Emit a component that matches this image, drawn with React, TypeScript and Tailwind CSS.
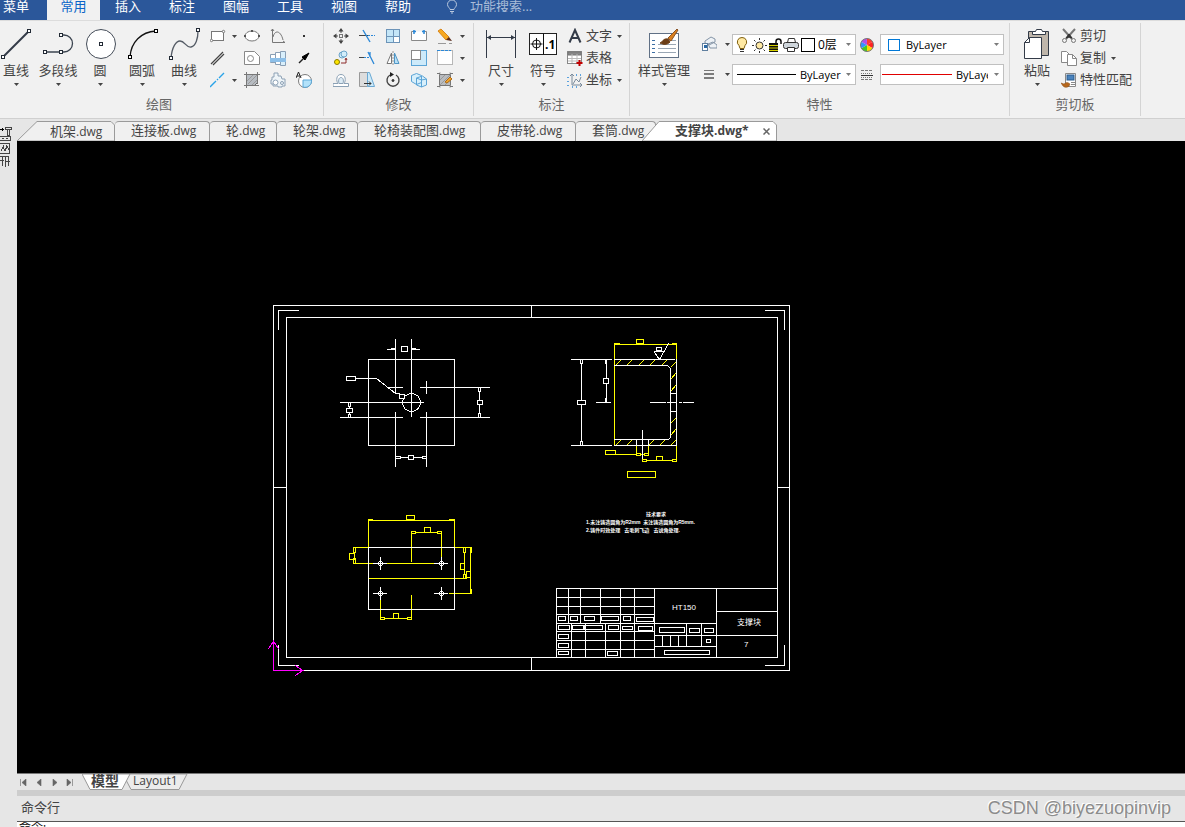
import React from "react";

type Box = [number, number, number, number];

const menus = ["插入", "标注", "图幅", "工具", "视图", "帮助"];

const docs = [
  { name: "连接板", cls: "w-[95px] pl-4" },
  { name: "轮", cls: "w-[67px] pl-4" },
  { name: "轮架", cls: "w-[81px] pl-4" },
  { name: "轮椅装配图", cls: "w-[123px] pl-4" },
  { name: "皮带轮", cls: "w-[95px] pl-4" },
  { name: "套筒", cls: "w-20 pl-4" },
];

function Arrow() {
  return (
    <svg width="5" height="3" viewBox="0 0 5 3" className="shrink-0 fill-[#444]">
      <path d="M0 0h5L2.5 3z" />
    </svg>
  );
}

function Icon({ children, size = 16 }: { children: React.ReactNode; size?: number }) {
  return (
    <svg width={size} height={size} viewBox={`0 0 ${size} ${size}`} fill="none" stroke="#777" className="shrink-0" aria-hidden="true">
      {children}
    </svg>
  );
}

function Nodes({ at, color = "#222a35" }: { at: [number, number][]; color?: string }) {
  return (
    <>
      {at.map(([x, y], i) => (
        <rect key={i} x={x - 1.5} y={y - 1.5} width="3" height="3" fill="#fff" stroke={color} />
      ))}
    </>
  );
}

function Big({ label, cls = "w-[42px]", icon }: { label: string; cls?: string; icon: React.ReactNode }) {
  return (
    <button className={`flex h-[66px] shrink-0 flex-col items-center pt-[3px] ${cls}`}>
      <Icon size={32}>{icon}</Icon>
      <span className="h-5 leading-5 whitespace-nowrap">{label}</span>
      <span className="pt-[3px]"><Arrow /></span>
    </button>
  );
}

function Small({ title, children }: { title: string; children: React.ReactNode }) {
  return (
    <button aria-label={title} className="flex h-[22px] w-[26px] items-center justify-center">
      <Icon>{children}</Icon>
    </button>
  );
}

function Drop({ cls = "w-[10px]" }: { cls?: string }) {
  return (
    <button aria-label="更多" className={`flex h-[22px] items-center justify-center ${cls}`}>
      <Arrow />
    </button>
  );
}

function Row({ label, drop, children }: { label: string; drop?: boolean; children: React.ReactNode }) {
  return (
    <button className="flex h-[22px] items-center gap-[3px] whitespace-nowrap">
      <Icon>{children}</Icon>
      <span>{label}</span>
      {drop && <span className="pl-[2px]"><Arrow /></span>}
    </button>
  );
}

function Group({ title, cls, children }: { title: string; cls: string; children: React.ReactNode }) {
  return (
    <section className={`my-[2px] shrink-0 border-r border-[#d4d4d4] ${cls}`}>
      <div className="flex h-[69px] pt-[2px]">{children}</div>
      <h2 className="h-6 text-center leading-6 text-[#666]">{title}</h2>
    </section>
  );
}

function DrawGroup() {
  return (
    <Group title="绘图" cls="-ml-3 w-[336px] pl-[7px]">
      <Big label="直线" icon={<><path d="M3 29L29 3" stroke="#333b48" strokeWidth="2" /><Nodes at={[[3, 29], [29, 3]]} /></>} />
      <Big label="多段线" icon={<><path d="M19 7h3a8.500 8.500 0 0 1 0 17H3" strokeWidth="1.300" stroke="#3b4450" /><Nodes at={[[3, 24], [19, 24], [19, 7]]} /></>} />
      <Big label="圆" icon={<><circle cx="17" cy="16" r="14.500" fill="#fff" stroke="#444c58" /><Nodes at={[[17, 16]]} /></>} />
      <Big label="圆弧" icon={<><path d="M4 29C5 14 15 4 30 3" stroke="#111" strokeWidth="1.300" /><Nodes at={[[4, 29], [30, 3]]} color="#000" /></>} />
      <Big label="曲线" icon={<><path d="M3 30C4 19 8 13 12 13C17 13 18 20 23 19C28 18 30 10 30 3" stroke="#555c66" strokeWidth="1.300" /><Nodes at={[[3, 30], [30, 2]]} /></>} />
      <div className="grid h-[66px] grid-cols-[24px_10px_26px_26px_26px]">
        <Small title="矩形"><rect x="1.500" y="3.500" width="12" height="9" fill="#fff" /><circle cx="1.500" cy="12.500" r="1.200" fill="#fff" /><circle cx="13.500" cy="3.500" r="1.200" fill="#fff" /></Small>
        <Drop />
        <Small title="椭圆"><ellipse cx="8" cy="8" rx="7" ry="5" fill="#fff" /><path d="M7 3h2M0 8h2M14 8h2" stroke="#555" strokeWidth="2" /></Small>
        <Small title="公式曲线"><path d="M2.500 1v13.500H15M1 3l1.500-2L4 3M13 13l2 1.500M3 9C5 1 11 3 13 12" /></Small>
        <Small title="点"><rect x="7" y="7" width="2" height="2" fill="#333" stroke="none" /></Small>

        <Small title="平行线"><path d="M1 14L13 2M3 15L14 4" stroke="#444" strokeWidth="1.200" /></Small>
        <span />
        <Small title="多边形"><path d="M.5 1.500h10l5 5v8H.5z" fill="#fff" stroke="#888" /><circle cx="6.500" cy="8.500" r="3" stroke="#888" /></Small>
        <Small title="轴"><path d="M.5 4.500h5v8h-5z" fill="#fff" stroke="#8a9fb5" /><path d="M5.500 2.500h5v12h-5z" fill="#fff" stroke="#8a9fb5" /><path d="M10.500 1.500h5v14h-5z" fill="#d9effb" stroke="#8a9fb5" /><path d="M0 8h16v4H0z" fill="#8dbfe8" stroke="none" /></Small>
        <Small title="箭头"><path d="M3 13l6-6" stroke="#222" strokeWidth="1.500" /><path d="M13 3l-7 4 3 3z" fill="#000" stroke="#000" /></Small>

        <Small title="中心线"><path d="M0 15l6-6M7 8l1-1M9 6l5-5" stroke="#29a3e8" strokeWidth="1.400" /></Small>
        <Drop />
        <Small title="填充"><path d="M2.500 2.500h11v8l-3 3h-8z" fill="#b7bcc2" stroke="#666" /><path d="M0 2.500h16M0 13.500h15M2.500 0v16M13.500 0v12" stroke="#777" /><path d="M3 9l6-6M4 12l9-9M8 13l5-5" stroke="#999" /></Small>
        <Small title="齿轮"><path d="M2 5h2V1h4v3h3l1 3h3v7h-3v1H8v-1H3v-2H1V8h1z" fill="#eef4f8" stroke="#8da1b5" /><circle cx="5.500" cy="10.500" r="2.500" fill="#fff" stroke="#8da1b5" /><circle cx="12" cy="11" r="1.500" stroke="#8da1b5" /></Small>
        <Small title="局部放大"><circle cx="9" cy="9" r="6.500" fill="#fff" stroke="#7d7d7d" /><path d="M7 8h8.500A6.500 6.500 0 0 1 7 15z" fill="#b3e2fa" stroke="#5aa7d8" /><path d="M0 6l2.500-6L5 6M1 4h3" stroke="#222" /></Small>
      </div>
    </Group>
  );
}

function ModifyGroup() {
  return (
    <Group title="修改" cls="w-[150px]">
      <div className="ml-1 grid h-[66px] grid-cols-[26px_26px_26px_26px_26px_8px]">
        <Small title="平移"><path d="M8 1v4M8 11v4M1 8h4M11 8h4" stroke="#555" /><path d="M8 0l2.500 3.500h-5zM8 16l2.500-3.500h-5zM0 8l3.500-2.500v5zM16 8l-3.500-2.500v5z" fill="#444" stroke="none" /><rect x="6.500" y="6.500" width="3" height="3" /></Small>
        <Small title="裁剪"><path d="M0 7.500h9" stroke="#444" /><path d="M9 7.500h7" stroke="#2b88d8" strokeDasharray="2 1" /><path d="M4 2l7 12" stroke="#2b88d8" strokeWidth="1.400" /></Small>
        <Small title="阵列"><rect x="1.500" y="1.500" width="13" height="13" fill="#fff" stroke="#6d94b8" /><path d="M8 2h6v6H8zM2 2h6v6H2zM2 8h6v6H2z" fill="#c4e6f8" stroke="none" /><path d="M8.500 1v14M1 8.500h14" stroke="#6d94b8" /></Small>
        <Small title="打断"><path d="M4 3.500H.500v9h15v-9H12" fill="#fff" stroke="#888" /><path d="M3 2v4M5 3.500H2M13 2v4M14 3.500h-3" stroke="#2b88d8" strokeWidth="1.500" /></Small>
        <Small title="删除"><path d="M1 3l3-2 8 8-3 3z" fill="#f6a821" stroke="#d9861a" /><path d="M9 12l3-3 3 4z" fill="#5b2c1c" stroke="none" /><path d="M1 15.500h8M12 15.500h3" stroke="#999" /></Small>
        <Drop cls="w-[9px]" />

        <Small title="平移复制"><circle cx="4" cy="12" r="2.500" fill="#ffe600" stroke="#8a7a00" /><circle cx="9" cy="5" r="3" fill="#d3edfa" stroke="#6ba4c9" /><circle cx="11" cy="4" r="3" fill="#d3edfa" stroke="#6ba4c9" /><path d="M8 13h5V9M12 10l1-2 1 2" stroke="#8c2b2b" /></Small>
        <Small title="延伸"><path d="M0 7.500h5" stroke="#444" /><path d="M5 7.500h6" stroke="#2b88d8" strokeDasharray="2 1" /><path d="M9 2l6 12M11 2v5" stroke="#2b88d8" strokeWidth="1.300" /></Small>
        <Small title="镜像"><path d="M6.500 3v10.500H2z" fill="#fff" stroke="#777" /><path d="M9.500 3v10.500H14z" fill="#b8e0f7" stroke="#4f95c4" /><path d="M8 1v14" stroke="#999" strokeDasharray="2 1" /></Small>
        <Small title="缩放"><rect x=".5" y=".5" width="15" height="15" fill="#cdeafa" stroke="#5ba4d6" /><rect x=".5" y=".5" width="9" height="9" fill="#fff" stroke="#888" /></Small>
        <Small title="选择"><rect x=".5" y=".5" width="15" height="14" fill="#fff" stroke="#777" strokeDasharray="1 1" /><path d="M0 .5h14" stroke="#2b88d8" strokeDasharray="3 1" /></Small>
        <Drop cls="w-[9px]" />

        <Small title="等距线"><path d="M0 11.500h5C3 9 3 2.500 8 2.500s5 6.500 3 9h4.500v3H0v-3" fill="#fff" stroke="#8ba1b5" /><path d="M6 11.500C5 8 6 5.500 8 5.500s3 2.500 2 6z" stroke="#8ba1b5" fill="#dcebf5" /></Small>
        <Small title="拉伸"><path d="M.5.5h8v14h-8z" fill="#ddd" stroke="#999" /><path d="M8.500.5h2l5 14h-7z" fill="#cdeafa" stroke="#6aa8d2" /><path d="M5 11.500h7M10 9.500l2 2-2 2" stroke="#333" /></Small>
        <Small title="旋转"><path d="M5 3a6 6 0 1 0 6 0" stroke="#444" strokeWidth="1.400" /><path d="M5 0v5l4-2.500z" fill="#222" stroke="none" /><circle cx="8" cy="8.500" r="1" fill="#333" stroke="#333" /></Small>
        <Small title="三维"><path d="M.5 3.500l5-2 5 2v7l-5 2-5-3zM5.500 6l6-2 4 3v6l-5 2-5-2z" fill="#d7effb" stroke="#5ba4d6" /><path d="M5.500 6l5 2v7M10.500 8l5-1" stroke="#5ba4d6" /></Small>
        <Small title="填充编辑"><path d="M2.500 2.500h11v11h-11z" fill="#b9bcc0" stroke="#777" /><path d="M3 8l5-5M3 13L13 3M8 13l5-5" stroke="#999" /><path d="M0 1.500h3v-1M0 14.500h3v1M16 1.500h-3v-1M16 14.500h-3v1" stroke="#777" /><path d="M8 10l5-5 2 2-5 4z" fill="#f0a32c" stroke="#b06c14" /></Small>
        <Drop cls="w-[9px]" />
      </div>
    </Group>
  );
}

function AnnotateGroup() {
  return (
    <Group title="标注" cls="w-[156px]">
      <div className="flex pl-[6px]">
        <Big
          label="尺寸"
          icon={
            <>
              <path d="M1.500 2v28M30.500 2v28M2 9.500h28" stroke="#333b48" />
              <path d="M2 9.500l4-2.500v5zM30 9.500l-4-2.500v5z" fill="#333b48" stroke="none" />
            </>
          }
        />
        <Big
          label="符号"
          icon={
            <>
              <rect x="2.500" y="5.500" width="27" height="21" fill="#fff" stroke="#222" />
              <path d="M16.500 5.500v21M3.500 16h12M9.500 10v12" stroke="#111" />
              <circle cx="9.500" cy="16" r="4" stroke="#111" />
              <text x="18" y="21" fill="#000" stroke="none" fontSize="12" fontWeight="700" fontFamily="Open Sans">.1</text>
            </>
          }
        />
        <div className="ml-[3px] flex flex-col">
          <Row label="文字" drop><path d="M2.500 14.500L8 2l5.500 12.500M4.500 10h7" stroke="#333b48" strokeWidth="2" /></Row>
          <Row label="表格"><rect x=".5" y="1.500" width="14" height="12" fill="#fff" stroke="#888" /><path d="M1 2h13v3H1z" fill="#888" /><path d="M1 8.500h13M1 11h13M5 4v9M10 4v9" stroke="#bbb" /><path d="M12.500 10v6M9.500 13h6" stroke="#c00000" strokeWidth="2" /></Row>
          <Row label="坐标" drop><path d="M5 2v11h10M3 4l2-2 2 2M13 11l2 2-2 2M6 12l3-5 3 3 2-5" stroke="#7a8b9c" /><path d="M1 5v1M1 9v1M1 13v1M5 15h1M9 15h1M9 3h1M13 3h1" stroke="#2b88d8" strokeWidth="1.500" /></Row>
        </div>
      </div>
    </Group>
  );
}

const wheel = ["#ff3b30", "#ff2222", "#ffd800", "#45c926", "#3393ff", "#b04ee8"];

function PropertyGroup() {
  const combo = "flex h-[21px] w-[124px] shrink-0 items-center border border-[#c0c0c0] bg-white text-black";
  const select = "min-w-0 appearance-none bg-transparent text-[11px] leading-4 outline-none";
  return (
    <Group title="特性" cls="w-[380px]">
      <Big
        label="样式管理"
        cls="ml-[5px] w-[58px]"
        icon={
          <>
            <rect x="1.500" y="5.500" width="29" height="24" fill="#fff" stroke="#607085" />
            <path d="M4 12.500h4M4 16.500h4M4 20.500h4M4 24.500h4" stroke="#3d6fa5" strokeDasharray="3 1" />
            <path d="M10 16.500h18M10 20.500h18M10 24.500h18M20 12.500h8" stroke="#9aa7b5" />
            <path d="M12 15c3-1 3-5 8-4l2 3c-3 3-6 3-10 1z" fill="#6b3d16" stroke="#6b3d16" />
            <path d="M20 10L29 1l1 1-7 11z" fill="#d97f1e" stroke="#8a5426" />
          </>
        }
      />
      <div className="ml-[3px] mt-2 flex flex-col gap-2">
        <div className="flex h-[22px] items-center">
          <Small title="图层"><path d="M4 5l6-4 4 2v3l-6 3-4-2zM7 8l5-2 4 3v3H9z" fill="#eef2f6" stroke="#8494a6" /><rect x="1.500" y="7.500" width="5" height="7" fill="#fff" stroke="#5f7f9f" /><rect x="3" y="9" width="3" height="3" fill="#2b6aa5" stroke="none" /></Small>
          <Drop />
        </div>
        <div className="flex h-[22px] items-center">
          <Small title="线宽"><path d="M3 4.500h10" /><path d="M3 8h10M3 12h10" strokeWidth="1.500" stroke="#555" /></Small>
          <Drop />
        </div>
      </div>
      <div className="mt-[9px] flex flex-col gap-[9px]">
        <div className={combo}>
          <Icon size={18}><path d="M9 1.500a4.500 4.500 0 0 0-3 8l1 3h4l1-3a4.500 4.500 0 0 0-3-8z" fill="#ffe9a3" stroke="#806010" /><path d="M7 13.500h4M7 15.500h4" stroke="#333" /></Icon>
          <Icon><circle cx="8.500" cy="8.500" r="3.500" fill="#ffe9a3" stroke="#333" /><path d="M8.500 1v2M8.500 14v2M1 8.500h2M14 8.500h2M3 3l1.500 1.500M14 3l-1.500 1.500M3 14l1.500-1.500M14 14l-1.500-1.500" stroke="#333" /></Icon>
          <Icon><path d="M9 9V4.500a2.500 2.500 0 0 1 5 0V7" stroke="#111" strokeWidth="1.500" /><rect x="2" y="6" width="9" height="9" fill="#111" stroke="none" /><path d="M2 8.500h9M2 11h9M2 13.500h9" stroke="#d7d100" /></Icon>
          <Icon><path d="M4.500 5.500l1-4h6l1 4" fill="#fff" stroke="#333" /><rect x=".5" y="5.500" width="15" height="6" rx="2" fill="#cfd6dc" stroke="#333" /><path d="M4.500 10.500h7v4h-7z" fill="#fff" stroke="#333" /></Icon>
          <span className="ml-[2px] h-[14px] w-[14px] shrink-0 border border-black bg-white" />
          <select aria-label="当前层" className="ml-[3px] min-w-0 flex-1 appearance-none bg-transparent text-xs leading-4 outline-none"><option>0层</option></select>
          <span className="mr-1 opacity-70"><Arrow /></span>
        </div>
        <div className={combo}>
          <span className="ml-1 h-px w-[59px] shrink-0 bg-black" />
          <select aria-label="线宽" className={`ml-1 flex-1 ${select}`}><option>ByLayer</option></select>
          <span className="mr-1 opacity-70"><Arrow /></span>
        </div>
      </div>
      <div className="mt-[9px] flex w-6 flex-col gap-2">
        <button aria-label="颜色" className="flex h-[22px] items-center justify-center pr-[2px]">
          <Icon>
            {wheel.map((c, i) => (
              <path key={c} d="M8 8L8 1.500A6.500 6.500 0 0 1 13.600 4.700z" fill={c} stroke="none" transform={`rotate(${i * 60} 8 8)`} />
            ))}
            <circle cx="8" cy="8" r="6.500" stroke="#777" />
          </Icon>
        </button>
        <button aria-label="线型" className="flex h-[22px] items-center justify-center pr-[2px]">
          <Icon><path d="M2 3.500h12M2 12.500h12" strokeDasharray="3 1" /><path d="M2 6.500h12M2 10.500h12" strokeDasharray="1 1" /><path d="M2 8.500h12" stroke="#333" /></Icon>
        </button>
      </div>
      <div className="mt-[9px] flex flex-col gap-[9px]">
        <div className={combo}>
          <span className="ml-[7px] h-3 w-3 shrink-0 border border-[#0078d7] bg-white" />
          <select aria-label="颜色" className={`ml-[6px] flex-1 ${select}`}><option>ByLayer</option></select>
          <span className="mr-1 opacity-70"><Arrow /></span>
        </div>
        <div className={combo}>
          <span className="ml-px h-px w-[70px] shrink-0 bg-[#e00000]" />
          <select aria-label="线型" className={`ml-1 w-8 ${select}`}><option>ByLayer</option></select>
          <span className="mr-1 ml-auto opacity-70"><Arrow /></span>
        </div>
      </div>
    </Group>
  );
}

function ClipboardGroup() {
  return (
    <Group title="剪切板" cls="w-[131px]">
      <Big
        label="粘贴"
        cls="ml-[6px] w-[42px]"
        icon={
          <>
            <path d="M7.500 3.500h20v24h-20z" fill="#bfb6ab" stroke="#333b48" />
            <path d="M11.500 6.500v-3h3l1-2h5l1 2h3v3z" fill="#fff" stroke="#333b48" />
            <path d="M8.500 9.500h12v21h-17v-16z" fill="#fff" stroke="#333b48" />
            <path d="M3.500 14.500h5v-5" stroke="#333b48" />
          </>
        }
      />
      <div className="ml-[3px] flex flex-col">
        <Row label="剪切"><path d="M2 1l9 10M14 1L5 11" stroke="#777" strokeWidth="2" /><path d="M8 6l3 4-3-1-3 1z" fill="#333" stroke="#333" /><circle cx="3.500" cy="12.500" r="2" stroke="#777" /><circle cx="12.500" cy="12.500" r="2" stroke="#777" /></Row>
        <Row label="复制" drop><path d="M.5 1.500h5l3 3v8h-8z" fill="#fff" stroke="#888" /><path d="M6.500 4.500h5l4 4v7h-9z" fill="#fff" stroke="#888" /><path d="M11.500 4.500v4h4" stroke="#888" /></Row>
        <Row label="特性匹配"><path d="M4.500 1.500h10v13h-10z" fill="#fff" stroke="#888" /><rect x="6" y="3" width="7" height="5" fill="#4a83bd" stroke="#2b5b8c" /><path d="M10 10.500h4M10 12.500h4" stroke="#888" /><path d="M0 11l3 1c2-2 4-2 6 0-1 4-5 4-7 2z" fill="#b5671d" stroke="#8a4a10" strokeWidth=".5" /></Row>
      </div>
    </Group>
  );
}

function DocTabs() {
  return (
    <nav className="flex h-[22px] items-end overflow-hidden bg-[#e6e6e6]">
      <button className="relative h-5 w-[98px] shrink-0 pl-[33px] text-left leading-[18px] whitespace-nowrap">
        <svg width="98" height="20" className="absolute inset-0">
          <path d="M0 20L20 .5h74l3.500 3.500v16z" fill="#f0f0f0" stroke="#9a9a9a" />
        </svg>
        <span className="relative">机架<span className="text-xs">.dwg</span></span>
      </button>
      {docs.map((d) => (
        <button
          key={d.name}
          className={`h-5 shrink-0 rounded-t-[4px] border-t border-r border-[#9a9a9a] bg-[#f0f0f0] pb-[2px] text-left leading-[17px] whitespace-nowrap ${d.cls}`}
        >
          {d.name}<span className="text-xs">.dwg</span>
        </button>
      ))}
      <div className="relative -ml-[14px] flex h-5 w-[135px] shrink-0 items-center pr-[5px] pl-[33px] whitespace-nowrap">
        <svg width="135" height="20" className="absolute inset-0">
          <path d="M0 20L17 .5h114l3.500 3.500v16z" fill="#fff" stroke="#9a9a9a" />
        </svg>
        <button className="relative flex-1 pb-[2px] text-left leading-[18px] font-bold">支撑块<span className="text-xs">.dwg*</span></button>
        <button aria-label="关闭" className="relative p-[2px]">
          <svg width="7" height="7" viewBox="0 0 7 7" stroke="#666" strokeWidth="1.500"><path d="M.5.5l6 6M6.500.5l-6 6" /></svg>
        </button>
      </div>
    </nav>
  );
}

const boxPath = (list: Box[]) => list.map(([a, b, c, d]) => `M${a} ${b}H${c}V${d}H${a}Z`).join("");

// x1, y1, x2, y2 of every rectangle in the sheet
const outlines: Box[] = [
  [273, 305, 789, 670], [286, 317, 777, 657], [368, 359, 454, 445], [368, 547, 454, 609],
];

const whiteBoxes: Box[] = [
  [401, 346, 407, 351], [346, 376, 355, 380],
  [348, 402, 350, 406], [348, 414, 350, 417], [478, 387, 480, 391], [478, 413, 480, 417],
  [395, 456, 400, 458], [422, 456, 426, 458],
  [580, 359, 582, 363], [580, 441, 582, 445], [656, 347, 661, 350],
  [399, 394, 404, 398], [346, 408, 352, 412], [477, 400, 482, 404], [408, 455, 413, 459],
  [577, 400, 585, 404], [603, 378, 608, 383],
];

const tableBoxes: Box[] = [
  [558, 616, 565, 620], [570, 616, 577, 620], [584, 616, 594, 620], [601, 616, 618, 620], [623, 616, 630, 620], [636, 617, 653, 621],
  [558, 625, 569, 629], [572, 625, 583, 629], [584, 625, 602, 629], [608, 625, 618, 629], [622, 626, 632, 629], [638, 626, 652, 630],
  [558, 634, 568, 638], [558, 643, 568, 647], [558, 651, 568, 654], [607, 651, 617, 655],
  [659, 627, 684, 632], [689, 628, 699, 632], [704, 628, 713, 632], [706, 639, 710, 642], [664, 650, 709, 654],
];

const yellowBoxes: Box[] = [
  [636, 339, 643, 343], [605, 450, 615, 454], [636, 453, 640, 455], [644, 453, 648, 455],
  [642, 459, 646, 461], [672, 459, 676, 461], [656, 456, 662, 460], [627, 471, 655, 477],
  [406, 515, 414, 519], [411, 531, 415, 533], [437, 531, 441, 533], [424, 527, 430, 532],
  [353, 547, 355, 552], [353, 558, 355, 563], [349, 553, 354, 559],
  [463, 547, 465, 552], [463, 574, 465, 578], [460, 563, 464, 569], [466, 571, 470, 577],
  [380, 617, 384, 619], [407, 617, 411, 619], [393, 613, 398, 618],
];

const holes = [[380, 563], [441, 563], [380, 593], [441, 593]];

function Sheet() {
  return (
    <svg width="540" height="380" viewBox="260 300 540 380" className="mt-[159px] ml-[243px] shrink-0" role="img" aria-label="支撑块">
      <g transform="translate(.5 .5)" fill="none" stroke="#fff" strokeLinecap="square" shapeRendering="crispEdges">
        {/* frame marks */}
        <path d="M278 329V310H298M765 310H784V329M278 645V665H298M784 645V665H765M531 305V317M531 657V670M273 487H286M777 487H789" />
        {/* front view */}
        <path d="M395 339V393M411 339V416M387 349H394M391 348H395M412 349H419M411 348H415M355 378H376L395 393H399M388 387H402M420 387H489M426 381V393M340 402H423M340 417H402M420 417H489M395 412V466M426 412V466M349 402V417M479 391V413M400 457H422" />
        <circle cx="411" cy="402" r="9" />
        {/* section */}
        <path stroke="#ff0" d="M614 359V344H676V359M614 343H619M672 343H676M614 359V445M676 445V460M636 445V453M648 445V453M605 454H648M642 460H676" />
        <path stroke="#ff0" d="M616 364L620 360M627 364L631 360M639 364L643 360M650 364L654 360M662 364L666 360M671 366L675 362M671 378L675 373M671 390L675 385M671 422L675 418M671 434L675 429M616 444L620 440M627 444L631 440M649 444L653 440M660 444L664 440M671 444L675 440" />
        <path d="M571 359H611M614 359H674M614 365H667L670 368V437L668 439H614M571 445H611M614 445H676M676 359V445M670 393H676M670 411H676M650 402H665M667 402H676M679 402H681M683 402H693M596 402H610M581 359V445M606 359V402M605 359V363M605 398V402M654 351H663M654 352L659 359L668 343M636 439V445M648 439V445M642 430V461" />
        {/* bottom view */}
        <path stroke="#ff0" d="M368 547V520H454V547M368 519H372M449 519H454M411 561V532H441V558M353 547H368M353 563H441M368 578H466M454 547H471M464 547V578M470 547V593M471 547V552M471 589V593M449 593H471M411 595V618H380V600" />
        <path stroke="#ff0" fill="#000" d={boxPath(yellowBoxes)} />
        <path d={boxPath(outlines)} />
        <path fill="#000" d={boxPath(whiteBoxes)} />
        {holes.map(([x, y]) => (
          <g key={`${x}-${y}`}>
            <circle cx={x} cy={y} r="2" />
            <path d={`M${x - 7} ${y}h13M${x} ${y - 6}v12`} />
          </g>
        ))}
        {/* title block */}
        <path d="M777 588H556V657M556 597H654M556 606H654M556 614H654M556 623H716M556 631H654M556 640H654M556 649H654M568 588V623M580 588V623M600 588V623M620 588V657M634 588V657M654 588V657M571 623V657M585 623V657M605 623V657M654 635H777M654 646H716M716 588V657M716 611H777M686 623V646M701 623V646M662 635V646M670 635V646M678 635V646" />
        <path d={boxPath(tableBoxes)} />
        {/* origin */}
        <path stroke="#f0f" d="M273 670V640M268 648L273 641L278 648M273 670H303M295 665L302 670L295 675" />
      </g>
      <g fill="#fff" fontFamily="Liberation Sans, Noto Sans CJK SC, sans-serif">
        <text x="672" y="610" fontSize="8">HT150</text>
        <text x="737" y="625" fontSize="8">支撑块</text>
        <text x="744" y="647" fontSize="8">7</text>
        <g fontSize="5" fontWeight="700">
          <text x="646" y="516" >技术要求</text>
          <text x="586" y="524" xmlSpace="preserve">1.未注铸造圆角为R2mm  未注铸造圆角为R5mm.</text>
          <text x="586" y="532" xmlSpace="preserve">2.铸件时效处理   去毛刺飞边   去锐角处理.</text>
        </g>
      </g>
    </svg>
  );
}

function SideBar() {
  return (
    <aside className="w-[17px] shrink-0 bg-[#e6e6e6] pt-[7px]">
      <svg width="13" height="44" viewBox="0 0 13 44" fill="none" stroke="#444" shapeRendering="crispEdges">
        <path d="M0 3.500h4M2.500 2v3" stroke="#000" />
        <path d="M5.500 1.500h6v2h-6zM7.500 4v5h2V4M0 10.500h10.500v4H0M2 12.500h2M6 12.500h2" />
        <path d="M0 17.500h9.500v10H0M1 25l2-4 2 4 2-5 2 4M3 19v2M6 19v2M0 30.500h9M0 34.500h4M2.500 31v9M5.500 31v10M8.500 31v9M5 35.500h5" />
      </svg>
    </aside>
  );
}

function LayoutTabs() {
  const nav = ["M1.500 0v7M7 0v7L3 3.500z", "M6 0v7L2 3.500z", "M2 0v7l4-3.500z", "M6.500 0v7M1 0v7l4-3.500z"];
  return (
    <div className="flex h-[17px] shrink-0 border-t border-[#777] bg-[#e6e6e6]">
      <div className="flex w-[65px] items-center pl-[2px]">
        {nav.map((d) => (
          <button key={d} aria-label="切换" className="flex w-4">
            <svg width="8" height="7" viewBox="0 0 8 7" fill="#666" stroke="#666" strokeWidth=".6"><path d={d} /></svg>
          </button>
        ))}
      </div>
      <div className="relative flex">
        <svg width="106" height="16" className="absolute inset-0">
          <path d="M44 6l5 9.500h48L105 0H47z" fill="#ececec" stroke="#999" />
          <path d="M0 0l8 15.500h32L48 0z" fill="#fff" stroke="#999" />
        </svg>
        <button className="relative w-12 pb-[2px] pl-[9px] text-left text-sm leading-[14px] font-bold whitespace-nowrap">模型</button>
        <button className="relative w-14 pb-[2px] pl-[3px] text-left text-xs leading-[14px]">Layout1</button>
      </div>
    </div>
  );
}

export default function App() {
  return (
    <div className="flex h-screen flex-col overflow-hidden bg-[#e6e6e6] font-['Open_Sans','Noto_Sans_CJK_SC',sans-serif] text-[13px] text-[#444]">
      <header className="flex h-5 shrink-0 overflow-hidden bg-[#2b579a] leading-3 text-white">
        <button className="flex w-[47px] items-start justify-center pr-[15px] whitespace-nowrap">菜单</button>
        <button className="flex w-[53px] items-start justify-center bg-[#f1f1f1] text-[#0a64c8]">常用</button>
        <nav className="ml-px flex">
          {menus.map((m) => (
            <button key={m} className="flex w-[54px] items-start justify-center">{m}</button>
          ))}
        </nav>
        <label className="flex items-start pl-[21px]">
          <svg width="12" height="14" viewBox="0 0 12 14" fill="none" stroke="#b9c8de" aria-label="搜索">
            <path d="M4 9.500C4 8 1.500 7 1.500 4.500a4.500 4.500 0 0 1 9 0C10.500 7 8 8 8 9.500zM4 11.500h4M5 13h2" />
          </svg>
          <input placeholder="功能搜索..." className="ml-3 h-3 w-40 bg-transparent leading-3 outline-none placeholder:text-[#a9bcd8]" />
        </label>
      </header>
      <div className="flex h-[99px] shrink-0 overflow-hidden border-t border-b border-t-[#dcdcdc] border-b-[#d0d0d0] bg-[#f1f1f1]">
        <DrawGroup />
        <ModifyGroup />
        <AnnotateGroup />
        <PropertyGroup />
        <ClipboardGroup />
      </div>
      <div className="flex min-h-0 flex-1">
        <SideBar />
        <div className="flex min-w-0 flex-1 flex-col">
          <DocTabs />
          <main className="flex min-h-0 flex-1 items-start overflow-hidden bg-black">
            <Sheet />
          </main>
          <LayoutTabs />
          <div className="h-[6px] shrink-0 bg-[#cdcdcd]" />
          <footer className="shrink-0">
            <div className="flex h-[25px] items-center justify-between pr-[14px] pb-[2px] pl-1">
              <span>命令行</span>
              <span className="font-['Liberation_Sans',sans-serif] text-lg leading-6 text-[#8c8c8c] [text-shadow:-1px_-1px_0_#fff]">CSDN @biyezuopinvip</span>
            </div>
            <div className="h-[6px] overflow-hidden border-t border-[#555] bg-white pl-[2px] text-xs leading-[11px] text-black">命令:</div>
          </footer>
        </div>
      </div>
    </div>
  );
}
